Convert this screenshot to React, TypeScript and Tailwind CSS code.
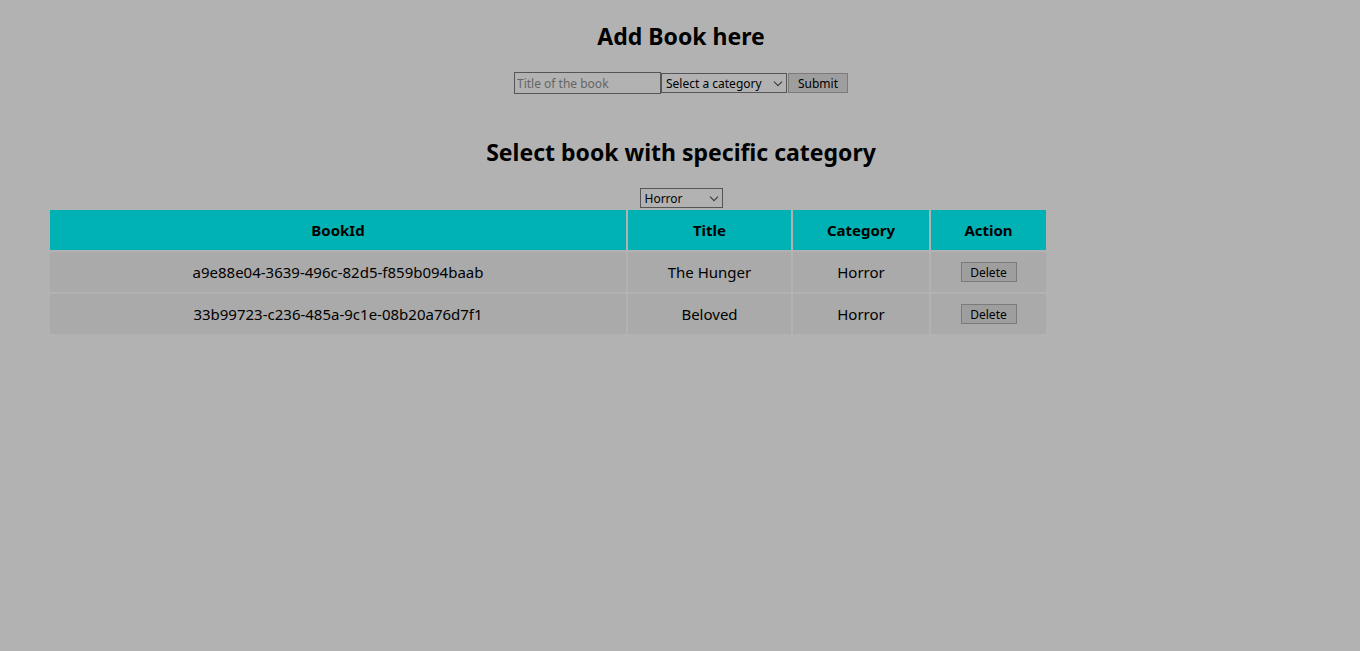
import { useState, type FormEvent, type ReactNode } from 'react';

type Book = { id: string; title: string; category: string };

const initialBooks: Book[] = [
  { id: 'a9e88e04-3639-496c-82d5-f859b094baab', title: 'The Hunger', category: 'Horror' },
  { id: '33b99723-c236-485a-9c1e-08b20a76d7f1', title: 'Beloved', category: 'Horror' },
];

const categories = ['Horror'];

type SelectProps = {
  label: string;
  value: string;
  onChange: (value: string) => void;
  className: string;
  children: ReactNode;
};

function Select({ label, value, onChange, className, children }: SelectProps) {
  return (
    <span className="relative inline-flex">
      <select
        aria-label={label}
        value={value}
        onChange={(e) => onChange(e.target.value)}
        className={`h-5 appearance-none border border-[#555555] bg-[#b2b2b2] pt-0.5 pl-1 text-xs leading-4 text-black ${className}`}
      >
        {children}
      </select>
      <svg
        viewBox="0 0 10 6"
        className="pointer-events-none absolute top-2 right-1 h-1.5 w-2.5"
        fill="none"
        stroke="#3c3c3c"
        strokeWidth="1.1"
        aria-hidden="true"
      >
        <path d="M1 0.6 L5 4.6 L9 0.6" />
      </svg>
    </span>
  );
}

const buttonStyle = 'h-5 border border-[#7b7b7b] bg-[#9e9e9e] pt-0.5 text-xs leading-4 text-black';

export default function App() {
  const [books, setBooks] = useState<Book[]>(initialBooks);
  const [title, setTitle] = useState('');
  const [category, setCategory] = useState('');
  const [filter, setFilter] = useState('Horror');

  const addBook = (e: FormEvent) => {
    e.preventDefault();
    if (!title || !category) return;
    setBooks([...books, { id: crypto.randomUUID(), title, category }]);
    setTitle('');
  };

  return (
    <main className="min-h-screen bg-[#b2b2b2] pt-5 font-['Noto_Sans','Open_Sans',sans-serif] text-black">
      <div className="pl-0.5">
        <h2 className="text-center text-[23px] leading-8 font-bold">Add Book here</h2>
        <form onSubmit={addBook} className="mt-5 flex items-center justify-center">
          <input
            aria-label="Title of the book"
            placeholder="Title of the book"
            value={title}
            onChange={(e) => setTitle(e.target.value)}
            className="h-[22px] w-[147px] border border-[#555555] bg-[#b2b2b2] px-0.5 text-xs placeholder:text-[#656565]"
          />
          <Select label="Category" value={category} onChange={setCategory} className="w-[126px]">
            <option value="">Select a category</option>
            {categories.map((c) => (
              <option key={c}>{c}</option>
            ))}
          </Select>
          <button type="submit" className={`ml-px w-[60px] ${buttonStyle}`}>
            Submit
          </button>
        </form>

        <h2 className="mt-[42px] text-center text-[23px] leading-8 font-bold">
          Select book with specific category
        </h2>
        <div className="mt-5 flex justify-center">
          <Select label="Filter by category" value={filter} onChange={setFilter} className="w-[83px]">
            {categories.map((c) => (
              <option key={c}>{c}</option>
            ))}
          </Select>
        </div>
      </div>

      <div className="px-12">
        <table className="w-full max-w-[1000px] table-fixed border-separate border-spacing-0.5 text-center text-[15px] leading-5">
          <colgroup>
            <col />
            <col className="w-[163px]" />
            <col className="w-[136px]" />
            <col className="w-[115px]" />
          </colgroup>
          <thead>
            <tr className="h-10 bg-[#00b2b3]">
              <th className="font-bold">BookId</th>
              <th className="font-bold">Title</th>
              <th className="font-bold">Category</th>
              <th className="font-bold">Action</th>
            </tr>
          </thead>
          <tbody>
            {books
              .filter((b) => b.category === filter)
              .map((b) => (
                <tr key={b.id} className="h-10 bg-[#aaaaaa]">
                  <td>{b.id}</td>
                  <td>{b.title}</td>
                  <td>{b.category}</td>
                  <td>
                    <button
                      type="button"
                      onClick={() => setBooks(books.filter((x) => x.id !== b.id))}
                      className={`mx-auto block w-14 ${buttonStyle}`}
                    >
                      Delete
                    </button>
                  </td>
                </tr>
              ))}
          </tbody>
        </table>
      </div>
    </main>
  );
}
